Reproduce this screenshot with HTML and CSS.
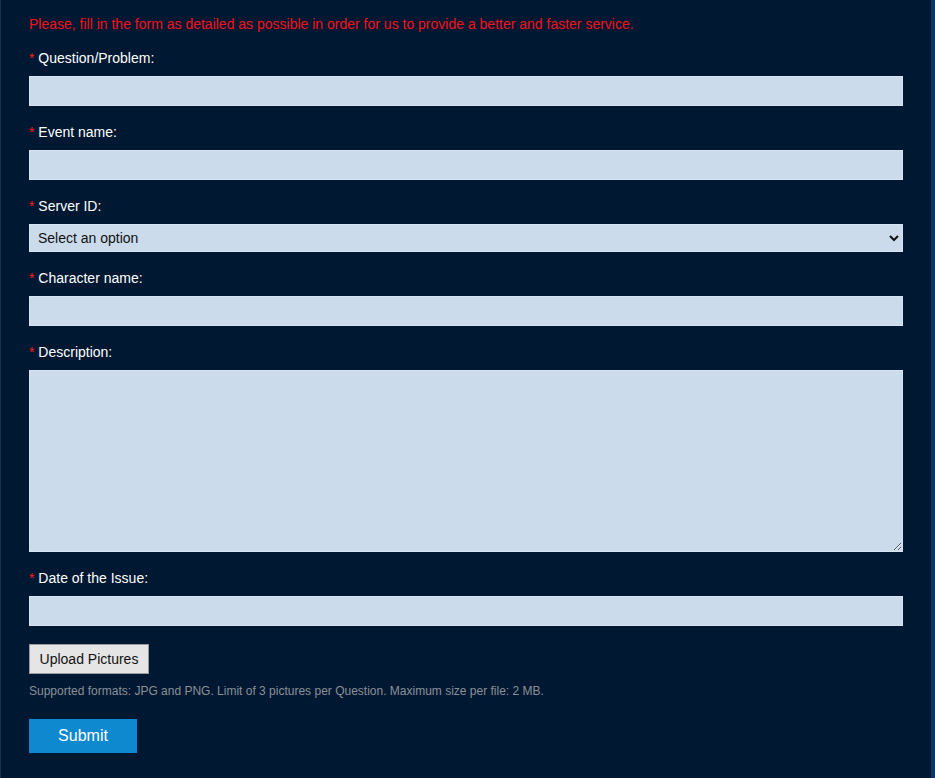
FILE: index.html
```html
<!DOCTYPE html>
<html lang="en">
<head>
    <meta charset="UTF-8">
    <meta name="viewport" content="width=device-width, initial-scale=1.0">
    <title>Submit a Question</title>
    <link rel="stylesheet" href="styles.css">
</head>
<body>
    <div class="page">
        <form class="ticket-form">
            <p class="notice">Please, fill in the form as detailed as possible in order for us to provide a better and faster service.</p>

            <div class="form-group">
                <label class="field-label"><span class="req">*</span> Question/Problem:</label>
                <input type="text" class="field">
            </div>

            <div class="form-group">
                <label class="field-label"><span class="req">*</span> Event name:</label>
                <input type="text" class="field">
            </div>

            <div class="form-group">
                <label class="field-label"><span class="req">*</span> Server ID:</label>
                <select class="field field-select">
                    <option>Select an option</option>
                </select>
            </div>

            <div class="form-group">
                <label class="field-label"><span class="req">*</span> Character name:</label>
                <input type="text" class="field">
            </div>

            <div class="form-group">
                <label class="field-label"><span class="req">*</span> Description:</label>
                <textarea class="field field-area"></textarea>
            </div>

            <div class="form-group">
                <label class="field-label"><span class="req">*</span> Date of the Issue:</label>
                <input type="text" class="field">
            </div>

            <button type="button" class="btn-upload">Upload Pictures</button>
            <p class="hint">Supported formats: JPG and PNG. Limit of 3 pictures per Question. Maximum size per file: 2 MB.</p>

            <button type="submit" class="btn-submit">Submit</button>
        </form>
    </div>
</body>
</html>
```

FILE: styles.css
```css
* {
    margin: 0;
    padding: 0;
    box-sizing: border-box;
}

body {
    font-family: 'Liberation Sans', Arial, sans-serif;
    background: #0b3566;
    height: 100vh;
    overflow: hidden;
}

.page {
    height: 100%;
    margin-right: 4px;
    background: #001831;
    border-left: 1px solid #1f3045;
    padding: 16px 28px 0 28px;
}

.notice {
    color: #f5101c;
    font-size: 14px;
    line-height: 16px;
    margin-bottom: 18px;
}

.form-group {
    margin-bottom: 18px;
}

.field-label {
    display: block;
    color: #ffffff;
    font-size: 14px;
    line-height: 16px;
    margin-bottom: 10px;
}

.req {
    color: #ff1a1a;
}

.field {
    display: block;
    width: 100%;
    height: 30px;
    background: #cbdbeb;
    border: 1px solid #d6e3f0;
    font-family: inherit;
    font-size: 14px;
    color: #111;
    padding: 0 8px;
    outline: none;
}

.field-select {
    height: 28px;
    padding: 0 4px;
}

.field-area {
    height: 182px;
    resize: vertical;
    padding: 6px 8px;
}

.btn-upload {
    display: block;
    width: 120px;
    height: 30px;
    background: #e5e5e5;
    border: 1px solid #9a9a9a;
    color: #111;
    font-family: inherit;
    font-size: 14px;
}

.hint {
    color: #8a9099;
    font-size: 12px;
    line-height: 14px;
    margin-top: 10px;
    margin-bottom: 21px;
}

.btn-submit {
    display: block;
    width: 108px;
    height: 34px;
    background: #0e88cf;
    border: none;
    color: #ffffff;
    font-family: inherit;
    font-size: 16px;
}
```
